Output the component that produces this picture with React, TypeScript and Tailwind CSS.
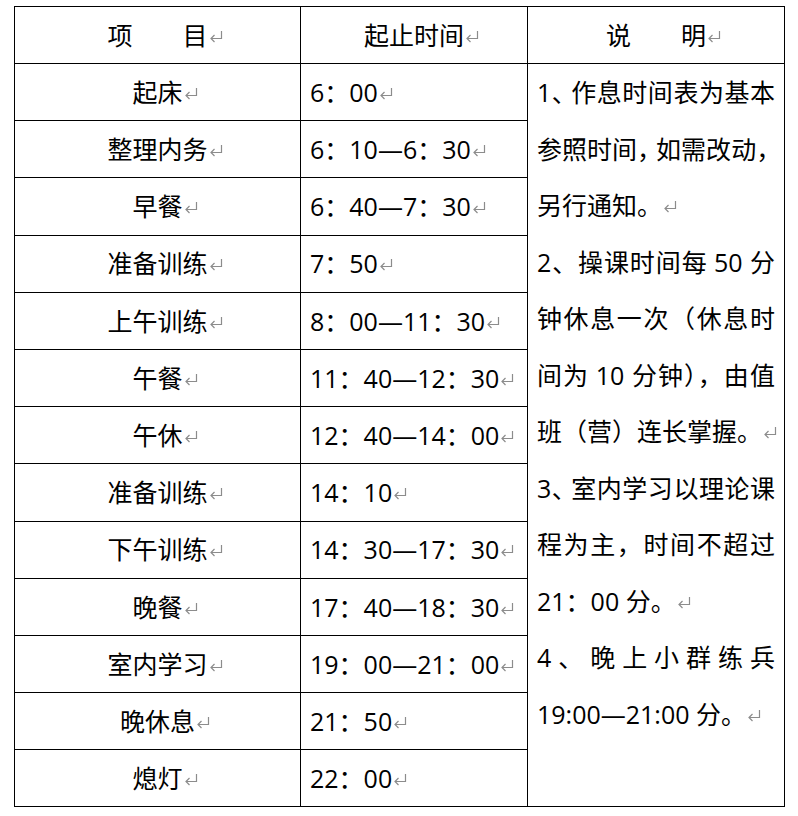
import type { ReactNode } from 'react'

const rows = [
  ['起床', '6：00'],
  ['整理内务', '6：10—6：30'],
  ['早餐', '6：40—7：30'],
  ['准备训练', '7：50'],
  ['上午训练', '8：00—11：30'],
  ['午餐', '11：40—12：30'],
  ['午休', '12：40—14：00'],
  ['准备训练', '14：10'],
  ['下午训练', '14：30—17：30'],
  ['晚餐', '17：40—18：30'],
  ['室内学习', '19：00—21：00'],
  ['晚休息', '21：50'],
  ['熄灯', '22：00'],
]

// Word's paragraph mark, kept out of the line width so centring ignores it
const Mark = () => (
  <span className="relative inline-block h-0 w-0">
    <svg
      className="absolute -top-[15px] left-[1px]"
      width="14"
      height="13"
      viewBox="0 0 14 13"
      fill="none"
      stroke="#8c8c8c"
      strokeWidth="1.2"
    >
      <path d="M12.5 1V8.5H2" />
      <path d="M5.5 5L2 8.5L5.5 12" />
    </svg>
  </span>
)

// justified line: tokens spread edge to edge
// ~ squeezes a punctuation mark a little, ^ sets it half width
const Tok = ({ c }: { c: string }) => {
  if (c.startsWith('~')) return <span className="shrink-0 whitespace-pre tracking-[-6px]">{c.slice(1)}</span>
  if (c.startsWith('^'))
    return <span className="shrink-0 whitespace-pre [font-feature-settings:'halt']">{c.slice(1)}</span>
  return <span className="shrink-0 whitespace-pre">{c}</span>
}

const JLine = ({ t }: { t: string }) => (
  <div className="flex h-[56.5px] items-baseline justify-between">
    {t.split('|').map((c, i) => (
      <Tok key={i} c={c} />
    ))}
  </div>
)

const Line = ({ children }: { children: ReactNode }) => (
  <div className="h-[56.5px] whitespace-nowrap">{children}</div>
)

const cell = 'border-b border-r border-black'

export default function App() {
  return (
    <div className="min-h-[816px] bg-white pl-[14px] pt-[6px] text-black">
      <div
        className="grid w-[771px] grid-cols-[286px_227px_257px] grid-rows-[57px_repeat(13,57.2px)] border-l border-t border-black text-[25px] leading-[56.5px]"
        style={{ fontFamily: '"Open Sans", "Noto Sans CJK SC", sans-serif' }}
      >
        <div className={`${cell} flex items-center justify-center`}>
          <span>
            项　　目
            <Mark />
          </span>
        </div>
        <div className={`${cell} flex items-center justify-center`}>
          <span>
            起止时间
            <Mark />
          </span>
        </div>
        <div className={`${cell} flex items-center justify-center`}>
          <span>
            说　　明
            <Mark />
          </span>
        </div>

        <div className={`${cell} col-start-3 row-span-13 row-start-2 px-[9px]`}>
          <JLine t="1|~、|作|息|时|间|表|为|基|本" />
          <JLine t="参|照|时|间|~，|如|需|改|动|~，" />
          <Line>
            另行通知。
            <Mark />
          </Line>
          <JLine t={'2|、|操|课|时|间|每|\u00a050\u00a0|分'} />
          <JLine t="钟|休|息|一|次|（|休|息|时" />
          <JLine t={'间|为|\u00a010\u00a0|分|钟|^）|，|由|值'} />
          <Line>
            班（营）连长掌握。
            <Mark />
          </Line>
          <JLine t="3|~、|室|内|学|习|以|理|论|课" />
          <JLine t="程|为|主|，|时|间|不|超|过" />
          <Line>
            21：00 分。
            <Mark />
          </Line>
          <JLine t="4|、|晚|上|小|群|练|兵" />
          <Line>
            19:00—21:00 分。
            <Mark />
          </Line>
        </div>

        {rows.map(([name, time], i) => [
          <div key={`n${i}`} className={`${cell} flex items-center justify-center`}>
            <span>
              {name}
              <Mark />
            </span>
          </div>,
          <div key={`t${i}`} className={`${cell} flex items-center whitespace-nowrap pl-[9px]`}>
            <span>
              {time}
              <Mark />
            </span>
          </div>,
        ])}
      </div>
    </div>
  )
}
